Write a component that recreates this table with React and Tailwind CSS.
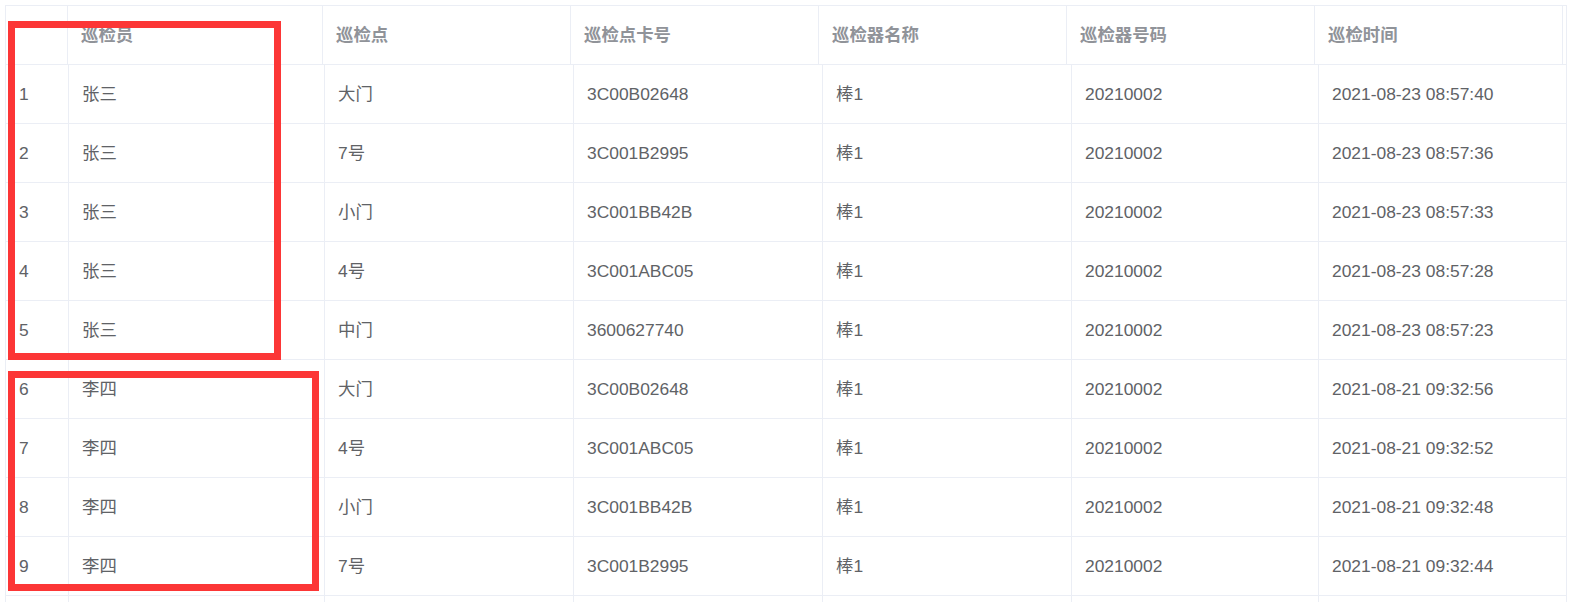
import React from "react";

const rows = [
  ["1", "张三", "大门", "3C00B02648", "棒1", "20210002", "2021-08-23 08:57:40"],
  ["2", "张三", "7号", "3C001B2995", "棒1", "20210002", "2021-08-23 08:57:36"],
  ["3", "张三", "小门", "3C001BB42B", "棒1", "20210002", "2021-08-23 08:57:33"],
  ["4", "张三", "4号", "3C001ABC05", "棒1", "20210002", "2021-08-23 08:57:28"],
  ["5", "张三", "中门", "3600627740", "棒1", "20210002", "2021-08-23 08:57:23"],
  ["6", "李四", "大门", "3C00B02648", "棒1", "20210002", "2021-08-21 09:32:56"],
  ["7", "李四", "4号", "3C001ABC05", "棒1", "20210002", "2021-08-21 09:32:52"],
  ["8", "李四", "小门", "3C001BB42B", "棒1", "20210002", "2021-08-21 09:32:48"],
  ["9", "李四", "7号", "3C001B2995", "棒1", "20210002", "2021-08-21 09:32:44"],
  ["", "", "", "", "", "", ""],
];

const headers = ["", "巡检员", "巡检点", "巡检点卡号", "巡检器名称", "巡检器号码", "巡检时间"];

const headW = ["w-[62px]", "w-[255px]", "w-[248px]", "w-[248px]", "w-[248px]", "w-[248px]", "w-[248px]"];
const bodyW = ["w-[63px]", "w-[256px]", "w-[249px]", "w-[249px]", "w-[249px]", "w-[247px]", "w-[247px]"];

export default function App() {
  return (
    <div
      className="relative h-[602px] w-[1573px] overflow-hidden bg-white"
      style={{ fontFamily: '"Liberation Sans", Arial, "Noto Sans CJK SC", sans-serif' }}
    >
      <div className="pl-[5px] pt-[5px]">
        <div className="w-[1562px] border-l border-r border-t border-[#ebeef5]">
          {/* header */}
          <div className="flex h-[59px] border-b border-[#ebeef5]">
            {headers.map((h, i) => (
              <div
                key={i}
                className={`${headW[i]} flex shrink-0 items-center border-r border-[#ebeef5] pl-[13px] text-[17.4px] font-bold text-[#909399]`}
              >
                {h}
              </div>
            ))}
          </div>
          {/* body */}
          {rows.map((r, ri) => (
            <div key={ri} className="flex h-[59px] border-b border-[#ebeef5]">
              {r.map((c, ci) => (
                <div
                  key={ci}
                  className={`${bodyW[ci]} flex shrink-0 items-center ${ci < 6 ? "border-r" : ""} border-[#ebeef5] pl-[13px] text-[17.4px] text-[#606266]`}
                >
                  {c}
                </div>
              ))}
            </div>
          ))}
        </div>
      </div>

      {/* red highlight boxes */}
      <div className="pointer-events-none absolute left-[8px] top-[21px] h-[339px] w-[273px] border-[7px] border-[#fc3636]" />
      <div className="pointer-events-none absolute left-[8px] top-[371px] h-[220px] w-[311px] border-[7px] border-[#fc3636]" />
    </div>
  );
}
